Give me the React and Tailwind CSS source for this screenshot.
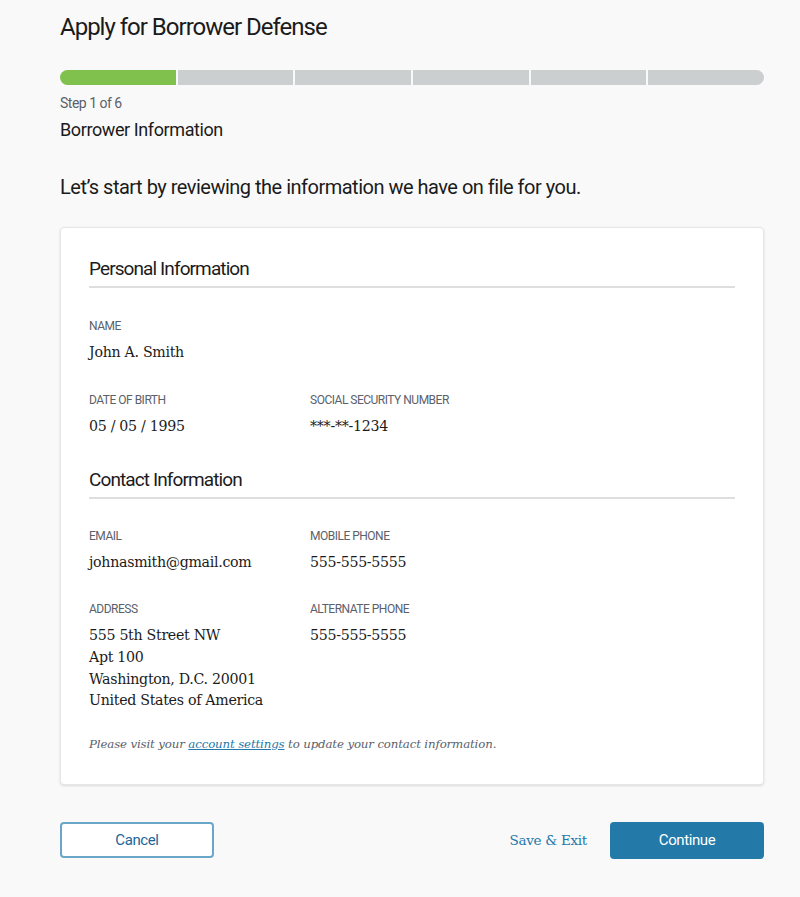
const sans = "font-['Roboto','Liberation_Sans',sans-serif]";
const serif = "font-['DejaVu_Serif','Liberation_Serif',serif]";

const Field = ({ label, children }) => (
  <div>
    <p className={`${sans} text-[12px] uppercase text-[#5b616b] tracking-[-0.5px] leading-4`}>{label}</p>
    <div className={`${serif} text-[14.2px] tracking-[-0.3px] text-[#1b1b1b] mt-[8px] leading-[21.7px]`}>{children}</div>
  </div>
);

const Section = ({ title, children }) => (
  <div>
    <h3 className={`${sans} text-[19px] text-[#1b1b1b] tracking-[-0.9px] leading-[26px] pb-[4px] border-b-2 border-[#dcdee0]`}>
      {title}
    </h3>
    {children}
  </div>
);

export default function App() {
  const steps = [1, 2, 3, 4, 5, 6];
  return (
    <div className="min-h-[897px] bg-[#f9f9f9] pl-[60px] pr-[36px] pt-[12px] pb-[40px]">
      <h1 className={`${sans} text-[24px] text-[#1b1b1b] tracking-[-1px] leading-[30px]`}>
        Apply for Borrower Defense
      </h1>

      <div className="flex mt-[28px] h-[15px] rounded-full overflow-hidden gap-[2px]">
        {steps.map((s) => (
          <div key={s} className={`flex-1 ${s === 1 ? "bg-[#80c04c]" : "bg-[#cbcfcf]"}`} />
        ))}
      </div>

      <p className={`${sans} text-[14px] text-[#5b616b] tracking-[-0.5px] leading-5 mt-[8px]`}>Step 1 of 6</p>
      <h2 className={`${sans} text-[18px] text-[#1b1b1b] tracking-[-0.4px] leading-6 mt-[5px]`}>Borrower Information</h2>

      <p className={`${sans} text-[20px] text-[#1b1b1b] tracking-[-0.5px] leading-7 mt-[31px]`}>
        Let’s start by reviewing the information we have on file for you.
      </p>

      <div className="mt-[26px] bg-white border border-[#e6e6e6] rounded shadow-sm px-[28px] pt-[28px] pb-[30px]">
        <Section title="Personal Information">
          <div className="mt-[30px]">
            <Field label="Name">John A. Smith</Field>
          </div>
          <div className="grid grid-cols-[221px_1fr] mt-[28px]">
            <Field label="Date of Birth">05 / 05 / 1995</Field>
            <Field label="Social Security Number">***-**-1234</Field>
          </div>
        </Section>

        <div className="mt-[30px]">
          <Section title="Contact Information">
            <div className="grid grid-cols-[221px_1fr] mt-[29px]">
              <Field label="Email">johnasmith@gmail.com</Field>
              <Field label="Mobile Phone">555-555-5555</Field>
            </div>
            <div className="grid grid-cols-[221px_1fr] mt-[27px]">
              <Field label="Address">
                555 5th Street NW
                <br />
                Apt 100
                <br />
                Washington, D.C. 20001
                <br />
                United States of America
              </Field>
              <Field label="Alternate Phone">555-555-5555</Field>
            </div>
          </Section>
        </div>

        <p className={`${serif} italic text-[11.8px] tracking-[-0.15px] text-[#5b616b] leading-5 mt-[22px]`}>
          Please visit your{" "}
          <a href="#" className="text-[#2378a9] underline">
            account settings
          </a>{" "}
          to update your contact information.
        </p>
      </div>

      <div className="flex items-center justify-between mt-[37px]">
        <button className={`${sans} w-[154px] h-[36px] rounded border-2 border-[#6aa6c8] bg-white text-[#20669a] text-[15px] tracking-[-0.4px]`}>
          Cancel
        </button>
        <div className="flex items-center gap-[23px]">
          <button className={`${serif} text-[#2378a9] text-[13.5px] tracking-[-0.3px]`}>Save &amp; Exit</button>
          <button className={`${sans} w-[154px] h-[37px] rounded bg-[#2379a8] text-white text-[15px] tracking-[-0.4px]`}>
            Continue
          </button>
        </div>
      </div>
    </div>
  );
}
